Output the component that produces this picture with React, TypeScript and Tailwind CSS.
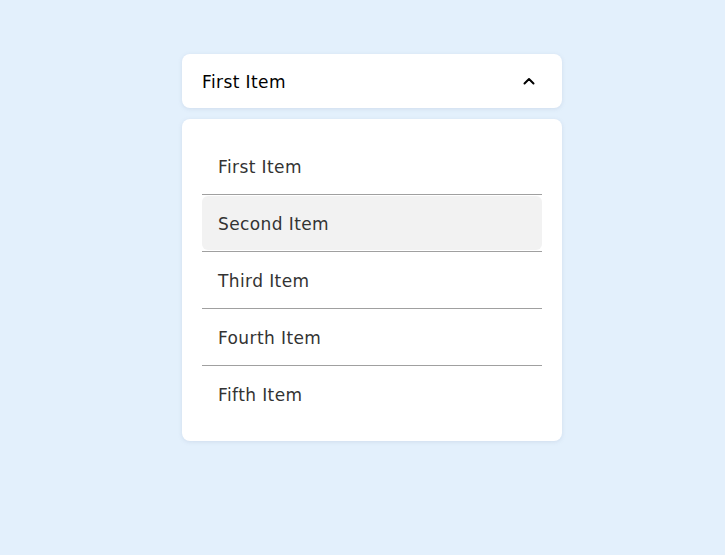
import React from "react";

const items = ["First Item", "Second Item", "Third Item", "Fourth Item", "Fifth Item"];

export default function App() {
  return (
    <div
      className="min-h-screen w-full bg-[#e3f0fc] pt-[54px]"
      style={{ fontFamily: '"DejaVu Sans", "Noto Sans", sans-serif' }}
    >
      <div className="ml-[182px] w-[380px]">
        <div className="flex h-[54px] items-center justify-between rounded-lg bg-white pl-5 pr-[27px] shadow-[0_1px_4px_rgba(120,140,170,0.18)]">
          <span className="pt-[3px] text-[17px] tracking-[0.4px] text-black">First Item</span>
          <svg width="12" height="8" viewBox="0 0 12 8" fill="none">
            <polyline points="1.5,6.5 6,2 10.5,6.5" stroke="#000" strokeWidth="2" strokeLinecap="round" strokeLinejoin="round" />
          </svg>
        </div>
        <ul className="mt-[11px] rounded-lg bg-white px-5 py-[19px] shadow-[0_1px_4px_rgba(120,140,170,0.18)]">
          {items.map((it, i) => (
            <li
              key={it}
              className={
                "py-[1px] " + (i < items.length - 1 ? "border-b border-[#a0a0a0]" : "")
              }
            >
              <div
                className={
                  "flex h-[54px] items-center rounded-md px-4 pt-[3px] text-[17px] tracking-[0.4px] text-[#333333] " +
                  (i === 1 ? "bg-[#f2f2f2]" : "")
                }
              >
                {it}
              </div>
            </li>
          ))}
        </ul>
      </div>
    </div>
  );
}
